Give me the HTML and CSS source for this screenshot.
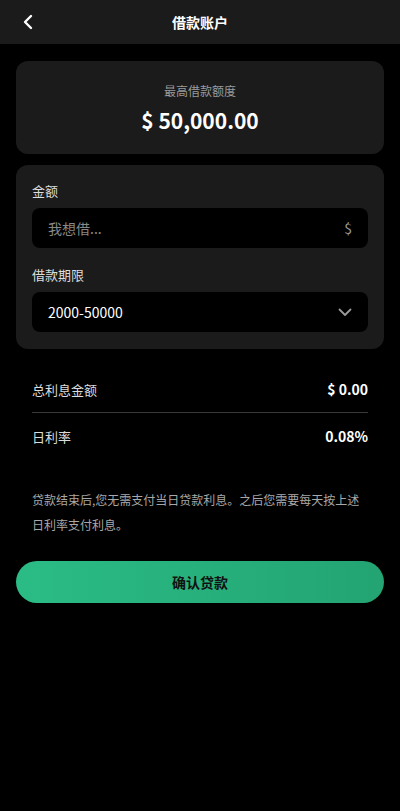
FILE: index.html
```html
<!DOCTYPE html>
<html lang="zh">
<head>
<meta charset="UTF-8">
<meta name="viewport" content="width=device-width, initial-scale=1.0">
<title>借款账户</title>
<link rel="stylesheet" href="styles.css">
</head>
<body>

    <header class="top-bar">
        <a class="back" href="#">
            <svg width="12" height="16" viewBox="0 0 12 16"><path d="M9 2 L3 8 L9 14" fill="none" stroke="#fff" stroke-width="2.4" stroke-linecap="round" stroke-linejoin="round"/></svg>
        </a>
        <h1>借款账户</h1>
    </header>

    <section class="card limit">
        <p class="limit-label">最高借款额度</p>
        <p class="limit-amount">$ 50,000.00</p>
    </section>

    <section class="card form">
        <label class="field-label">金额</label>
        <div class="field">
            <input type="text" class="amount-input" placeholder="我想借...">
            <span class="suffix">$</span>
        </div>

        <label class="field-label">借款期限</label>
        <div class="field">
            <span class="select-value">2000-50000</span>
            <svg width="14" height="9" viewBox="0 0 14 9"><path d="M1.5 1.5 L7 7 L12.5 1.5" fill="none" stroke="#9a9a9a" stroke-width="1.8" stroke-linecap="round" stroke-linejoin="round"/></svg>
        </div>
    </section>

    <section class="summary">
        <div class="summary-row">
            <span>总利息金额</span>
            <strong>$ 0.00</strong>
        </div>
        <div class="summary-row">
            <span>日利率</span>
            <strong>0.08%</strong>
        </div>
    </section>

    <p class="note">贷款结束后,您无需支付当日贷款利息。之后您需要每天按上述日利率支付利息。</p>

    <button class="confirm-button">确认贷款</button>

</body>
</html>
```

FILE: styles.css
```css
body {
    margin: 0;
    background-color: #000;
    color: #fff;
    font-family: "Noto Sans CJK SC", "Noto Sans", sans-serif;
}

.top-bar {
    height: 44px;
    background-color: #1b1b1b;
    display: flex;
    align-items: center;
    justify-content: center;
    position: relative;
}
.top-bar h1 {
    margin: 0;
    font-size: 14px;
    font-weight: 700;
}
.back {
    position: absolute;
    left: 22px;
    top: 14px;
    display: flex;
}

.card {
    margin: 0 16px;
    background-color: #1b1b1b;
    border-radius: 12px;
}

.limit {
    margin-top: 17px;
    height: 93px;
    display: flex;
    flex-direction: column;
    align-items: center;
    justify-content: center;
}
.limit p {
    margin: 0;
}
.limit-label {
    font-size: 12px;
    color: #9a9a9a;
    line-height: 18px;
    margin-top: 0 !important;
}
.limit-amount {
    font-size: 21px;
    font-weight: 700;
    line-height: 28px;
    margin-top: 6px !important;
}

.form {
    margin-top: 11px;
    padding: 16px 16px 17px;
    display: flex;
    flex-direction: column;
}
.field-label {
    font-size: 13px;
    color: #ddd;
    line-height: 20px;
    margin-bottom: 7px;
}
.field {
    height: 40px;
    background-color: #000;
    border-radius: 8px;
    display: flex;
    align-items: center;
    justify-content: space-between;
    padding: 0 16px;
    box-sizing: border-box;
    margin-bottom: 17px;
}
.field:last-child {
    margin-bottom: 0;
}
.amount-input {
    flex: 1;
    background: transparent;
    border: none;
    outline: none;
    color: #fff;
    font-family: inherit;
    font-size: 14px;
    padding: 0;
}
.amount-input::placeholder {
    color: #888;
}
.suffix {
    font-size: 14px;
    color: #999;
}
.select-value {
    font-size: 14px;
}

.summary {
    margin: 17px 32px 0;
}
.summary-row {
    display: flex;
    justify-content: space-between;
    align-items: center;
    height: 46px;
    font-size: 13px;
}
.summary-row:first-child {
    border-bottom: 1px solid #3a3a3a;
}
.summary-row span {
    color: #ddd;
}
.summary-row strong {
    font-size: 14px;
    font-weight: 700;
}

.note {
    margin: 28px 32px 0;
    font-size: 12px;
    line-height: 25px;
    color: #a8a8a8;
}

.confirm-button {
    display: block;
    margin: 24px 16px 0;
    width: calc(100% - 32px);
    height: 42px;
    border: none;
    border-radius: 21px;
    background: linear-gradient(90deg, #2bbc85, #23a472);
    color: #111;
    font-family: inherit;
    font-size: 14px;
    font-weight: 700;
    cursor: pointer;
}
```
